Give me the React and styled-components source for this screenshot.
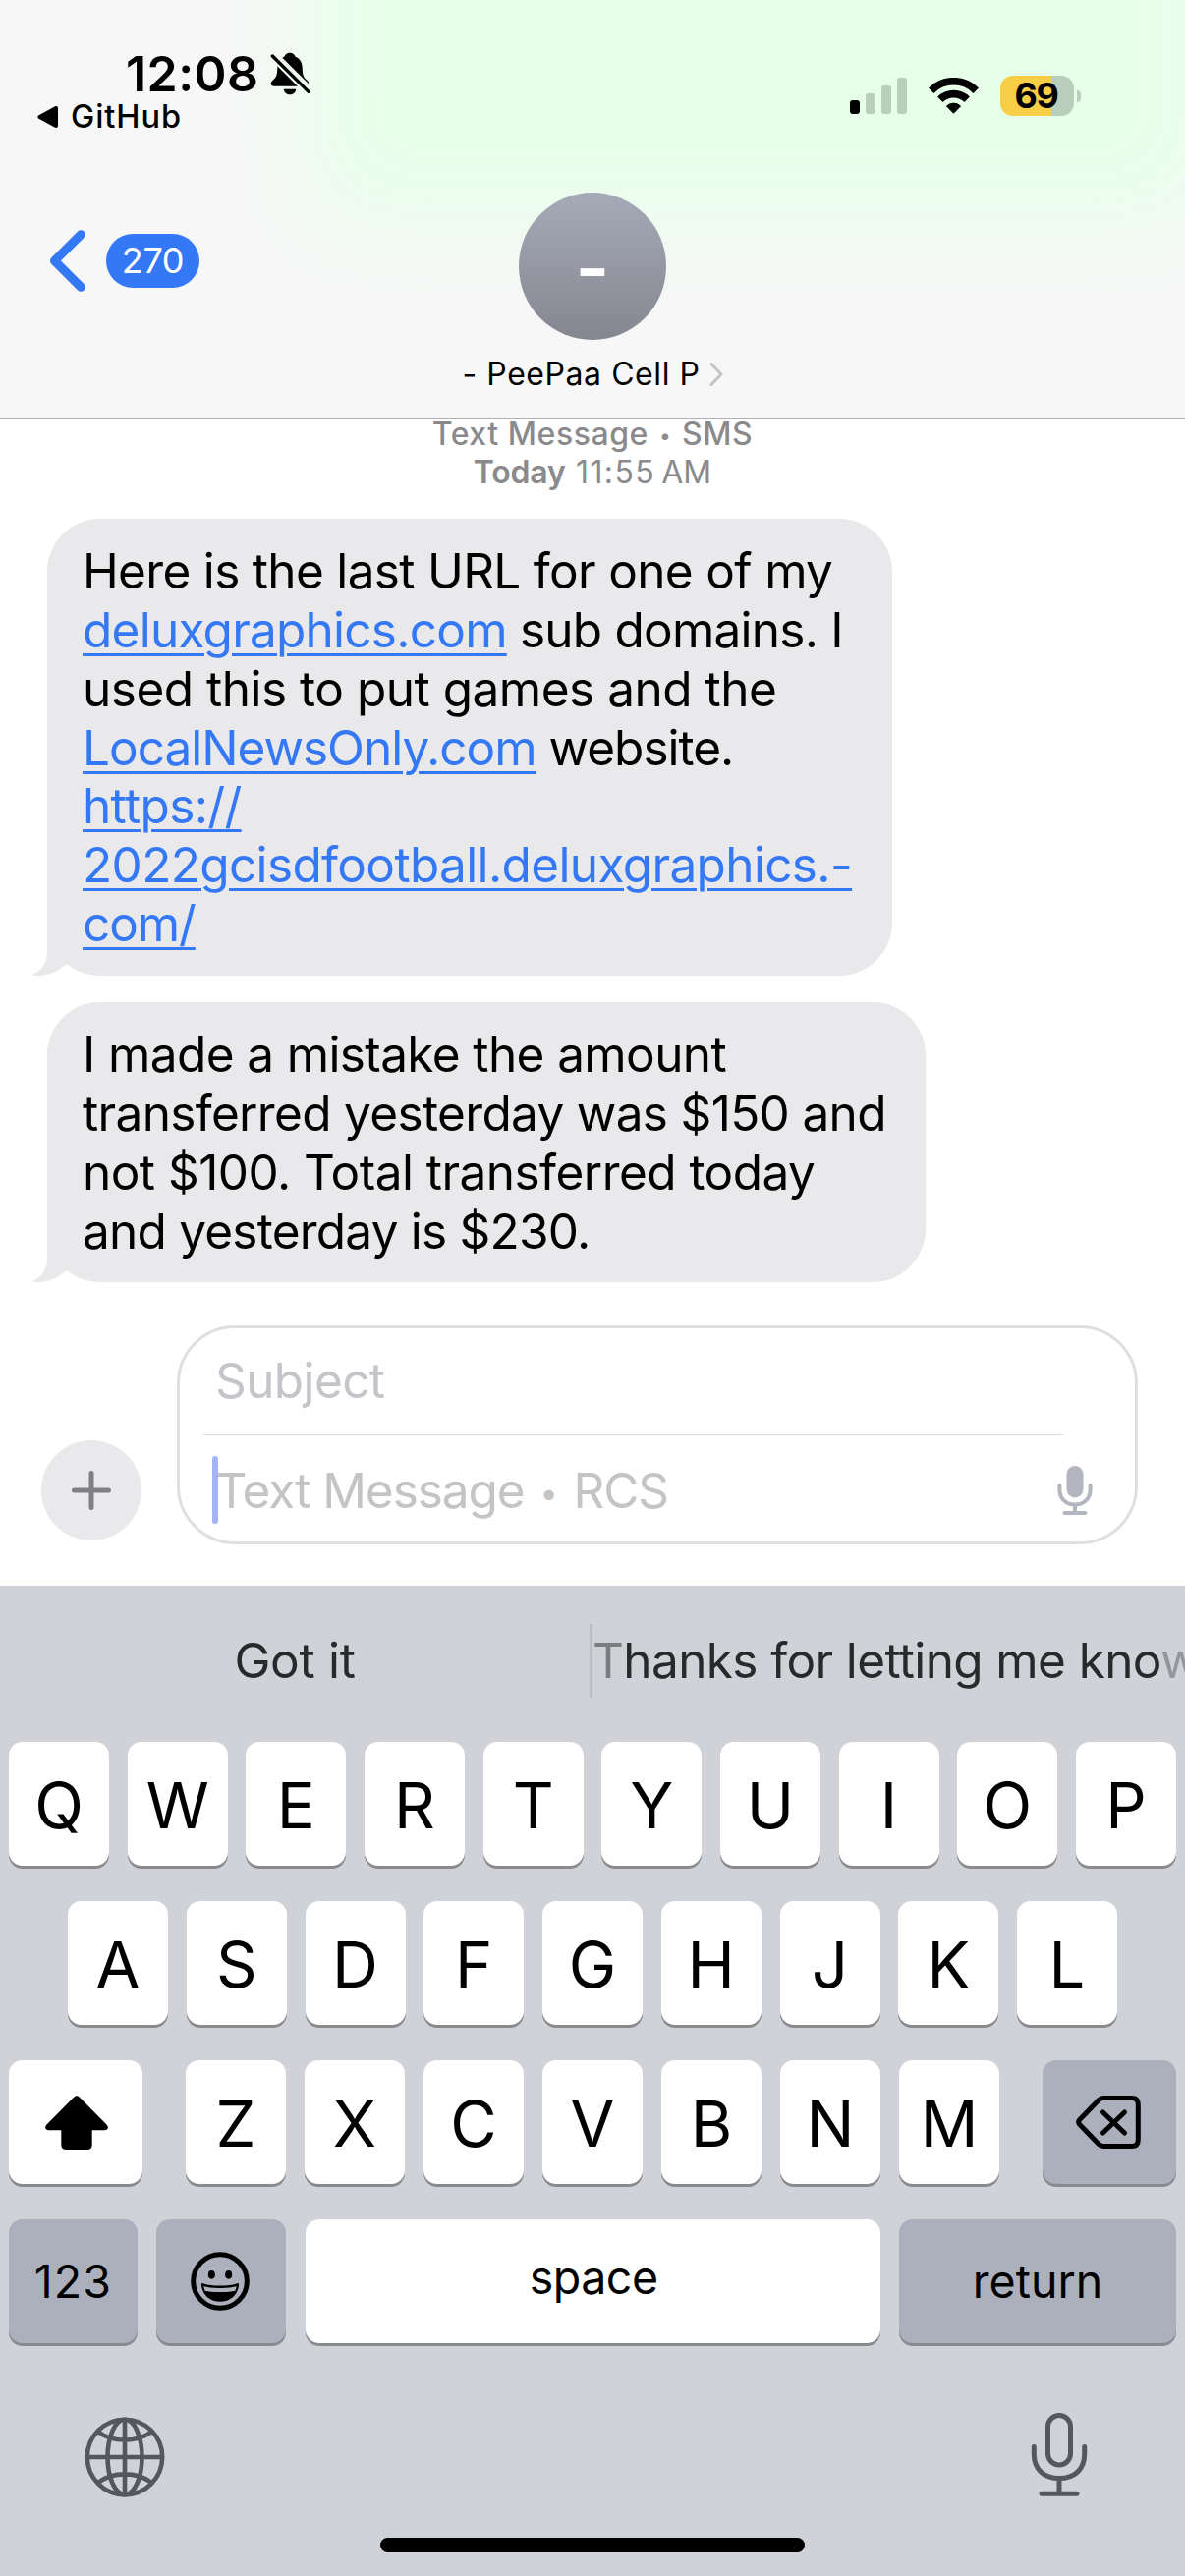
import React from 'react';
import styled, { createGlobalStyle } from 'styled-components';

const GlobalStyle = createGlobalStyle`
  *, *::before, *::after { box-sizing: border-box; }
  body { margin: 0; background: #fff; }
  svg { display: block; flex: none; }
`;

const Screen = styled.main`
  width: 1206px;
  height: 2622px;
  display: flex;
  flex-direction: column;
  overflow: hidden;
  background: #fff;
  color: #000;
  font-family: Inter, 'Liberation Sans', sans-serif;
  white-space: pre;
`;

/* ---------- header ---------- */

const Header = styled.header`
  position: relative;
  z-index: 1;
  height: 426px;
  flex: none;
  display: flex;
  flex-direction: column;
  overflow: hidden;
  background: #f7f7f7;
  border-bottom: 1px solid #b0b0b2;
`;

/* A green bubble scrolled beneath the translucent header. */
const HeaderGlow = styled.div`
  position: absolute;
  top: -200px;
  left: 315px;
  width: 920px;
  height: 425px;
  background: #e6ffe8;
  filter: blur(52px);
`;

const StatusBar = styled.div`
  position: relative;
  height: 150px;
  display: flex;
  justify-content: space-between;
`;

const StatusLeft = styled.div`
  padding-top: 48px;
  display: flex;
  flex-direction: column;
`;

const ClockRow = styled.div`
  display: flex;
  align-items: center;
  gap: 12px;
  height: 54px;
  padding-left: 128px;
`;

const Clock = styled.span`
  font-size: 50px;
  font-weight: 600;
  line-height: 54px;
  letter-spacing: 0.44px;
`;

const ReturnLink = styled.div`
  display: flex;
  align-items: center;
  gap: 12px;
  height: 30px;
  margin-top: 2px;
  padding-left: 38px;
  font-size: 32.5px;
  font-weight: 500;
  line-height: 30px;
  letter-spacing: 0.93px;
`;

const StatusRight = styled.div`
  display: flex;
  align-items: center;
  gap: 22px;
  height: 41px;
  margin: 77px 106px 0 0;
`;

const SignalBars = styled.div`
  display: flex;
  align-items: flex-end;
  gap: 6px;
  height: 37px;
`;

const SignalBar = styled.span`
  width: 10px;
  height: ${(p) => p.$height}px;
  border-radius: 3px;
  background: ${(p) => (p.$active ? '#000' : '#b9cfbc')};
`;

const Battery = styled.div`
  display: flex;
  align-items: center;
  gap: 3px;
`;

const BatteryBody = styled.div`
  display: flex;
  align-items: center;
  justify-content: center;
  width: 75px;
  height: 41px;
  padding-right: 2px;
  border-radius: 13px;
  background: linear-gradient(to right, #f7ce46 52px, #b9cfbc 52px);
  font-size: 36px;
  font-weight: 700;
  line-height: 41px;
  letter-spacing: -1.38px;
`;

const BatteryCap = styled.span`
  width: 4px;
  height: 12px;
  border-radius: 0 6px 6px 0;
  background: #b9cfbc;
`;

const NavBar = styled.nav`
  position: relative;
  flex: 1;
  display: grid;
  grid-template-columns: 1fr auto 1fr;
`;

const BackButton = styled.div`
  display: flex;
  align-items: center;
  gap: 21px;
  height: 63px;
  margin-top: 84px;
  padding-left: 50px;
`;

const UnreadBadge = styled.span`
  width: 95px;
  height: 55px;
  border-radius: 28px;
  background: #3478f6;
  color: #fff;
  text-align: center;
  font-size: 36px;
  line-height: 55px;
  letter-spacing: -0.38px;
`;

const Contact = styled.div`
  display: flex;
  flex-direction: column;
  align-items: center;
  padding-top: 46px;
`;

const Avatar = styled.div`
  width: 150px;
  height: 150px;
  border-radius: 50%;
  background: linear-gradient(#a6aab8, #848790);
  color: #fff;
  text-align: center;
  font-size: 75px;
  font-weight: 600;
  line-height: 154px;
`;

const ContactName = styled.div`
  display: flex;
  align-items: center;
  gap: 9px;
  margin-top: 15px;
  font-size: 32px;
  line-height: 39px;
  letter-spacing: 0.56px;
`;

/* ---------- thread ---------- */

const Thread = styled.section`
  display: flex;
  flex-direction: column;
  align-items: flex-start;
  margin-top: -4px;
`;

const Stamp = styled.div`
  align-self: center;
  margin-bottom: 28px;
  color: #8a8a8d;
  text-align: center;
  font-size: 32px;
  font-weight: 500;
  line-height: 39px;
  letter-spacing: 0.55px;
`;

const StampDay = styled.span`
  font-weight: 600;
  letter-spacing: -0.2px;
`;

const StampTime = styled.span`
  font-weight: 400;
  letter-spacing: 1.4px;
`;

const StampMeridiem = styled.span`
  font-weight: 400;
  letter-spacing: 0;
  word-spacing: -3px;
`;

const Dot = styled.span`
  display: inline-block;
  width: ${(p) => p.$width}px;
  height: 1em;
  line-height: 1em;
  font-size: 0.66em;
  letter-spacing: 0;
  text-align: center;
  vertical-align: 0.11em;
`;

const Bubble = styled.div`
  position: relative;
  width: ${(p) => p.$width}px;
  height: ${(p) => p.$height}px;
  margin: 0 0 27px 48px;
  padding: 24px 0 0 36px;
  border-radius: 54px;
  background: #e9e9eb;
`;

const BubbleTail = styled.svg`
  position: absolute;
  left: -16px;
  bottom: 0;
`;

const Line = styled.div`
  font-size: 49.5px;
  line-height: 59.85px;
  letter-spacing: ${(p) => p.$tracking}px;
`;

const Link = styled.span`
  color: #3478f6;
  text-decoration: underline;
  text-decoration-thickness: 3px;
  text-underline-offset: 6px;
`;

/* ---------- composer ---------- */

const Composer = styled.section`
  display: flex;
  align-items: flex-end;
  gap: 36px;
  padding: 17px 48px 42px 42px;
`;

const AddButton = styled.div`
  display: flex;
  align-items: center;
  justify-content: center;
  width: 102px;
  height: 102px;
  margin-bottom: 4px;
  border-radius: 50%;
  background: #e9e9eb;
`;

const Field = styled.div`
  flex: 1;
  height: 223px;
  border: 3px solid #dfdfdf;
  border-radius: 59px;
`;

const SubjectRow = styled.div`
  height: 108px;
  padding-left: 36px;
  color: #c5c5c9;
  font-size: 49.5px;
  line-height: 106px;
  letter-spacing: -0.6px;
`;

const FieldDivider = styled.div`
  height: 1px;
  margin: 0 73px 0 24px;
  background: #dcdcdc;
`;

const BodyRow = styled.div`
  display: flex;
  align-items: center;
  height: 108px;
  padding: 3px 43px 0 33px;
`;

const Caret = styled.span`
  width: 5.5px;
  height: 69px;
  border-radius: 3px;
  background: #a5b3f7;
`;

const Placeholder = styled.span`
  flex: 1;
  margin-left: -2px;
  color: #c4c4c4;
  font-size: 49.5px;
  line-height: 60px;
  letter-spacing: -1.05px;
`;

/* ---------- keyboard ---------- */

const Keyboard = styled.section`
  flex: 1;
  display: flex;
  flex-direction: column;
  background: #d1d2d8;
`;

const Suggestions = styled.div`
  display: flex;
  height: 159px;
  padding: 39px 0 45px;
`;

const Suggestion = styled.div`
  width: ${(p) => p.$width}px;
  overflow: hidden;
  color: #28292b;
  text-align: ${(p) => p.$align || 'left'};
  font-size: 49.5px;
  line-height: 75px;
  letter-spacing: ${(p) => p.$tracking}px;
`;

const Faded = styled.span`
  opacity: ${(p) => p.$opacity};
`;

const SuggestionDivider = styled.div`
  width: 3px;
  height: 75px;
  background: #bdbec4;
`;

const KeyRow = styled.div`
  display: flex;
  justify-content: space-between;
  margin-bottom: 36px;
  padding: 0 ${(p) => p.$inset || 9}px;
`;

const KeyGroup = styled.div`
  display: flex;
  justify-content: space-between;
  width: 828px;
`;

const Key = styled.div`
  display: flex;
  align-items: center;
  justify-content: center;
  width: ${(p) => p.$width || 102}px;
  height: 126px;
  padding: ${(p) => p.$pad || '3px 0 0'};
  border-radius: 14px;
  background: ${(p) => (p.$dark ? '#abb0bc' : '#fff')};
  box-shadow: 0 3px 0 #898a8d;
  font-size: ${(p) => (p.$pad ? 46.5 : 65)}px;
  letter-spacing: ${(p) => p.$tracking || 0}px;
`;

const KeyboardFooter = styled.div`
  display: flex;
  justify-content: space-between;
  align-items: center;
  height: 88px;
  margin-top: 33px;
  padding: 0 99px 0 86px;
`;

const GlobeSlot = styled.div`
  padding-top: 6px;
`;

const MicSlot = styled.div`
  padding-top: 2px;
`;

const HomeIndicator = styled.div`
  width: 432px;
  height: 15px;
  margin: 41px auto 0;
  border-radius: 8px;
  background: #000;
`;

/* ---------- icons ---------- */

const BellSlash = () => (
  <svg width="41" height="44" viewBox="30 28 123 132">
    <defs>
      <mask id="bell-cut">
        <rect x="0" y="0" width="192" height="192" fill="#fff" />
        <path d="M20 19L170 168" stroke="#000" strokeWidth="29" />
      </mask>
    </defs>
    <g mask="url(#bell-cut)">
      <path d="M90 30C81 30 75 35 73 42C59 48 52 60 52 76C51 98 49 105 38 114C29 121 31 132 42 132H138C149 132 151 121 142 114C131 105 129 98 128 76C128 60 121 48 107 42C105 35 99 30 90 30Z" />
    </g>
    <path d="M71 141H109C107 152 99 158 90 158C81 158 73 152 71 141Z" />
    <path d="M37 40L147 149" stroke="#000" strokeWidth="10" strokeLinecap="round" />
  </svg>
);

const Wifi = () => (
  <svg width="51" height="37" viewBox="0 0 51 37" fill="none" stroke="#000">
    <path d="M2.7 13.2A32.2 32.2 0 0 1 48.3 13.2" strokeWidth="7.7" />
    <path d="M11.8 22.3A19.4 19.4 0 0 1 39.2 22.3" strokeWidth="7.7" />
    <path d="M18.4 29A10.2 10.2 0 0 1 32.6 29L25.5 36.2Z" fill="#000" strokeWidth="1" strokeLinejoin="round" />
  </svg>
);

const ReturnArrow = () => (
  <svg width="22" height="22" viewBox="0 0 22 22">
    <path d="M19 2V20L2.5 11Z" stroke="#000" strokeWidth="4" strokeLinejoin="round" />
  </svg>
);

const BackChevron = () => (
  <svg width="37" height="63" viewBox="0 0 37 63" fill="none">
    <path d="M32.3 4.7L5.5 31.5L32.3 58.3" stroke="#3478f6" strokeWidth="9" strokeLinecap="round" strokeLinejoin="round" />
  </svg>
);

const SmallChevron = () => (
  <svg width="14" height="24" viewBox="0 0 14 24" fill="none">
    <path d="M2 1.5L12 12L2 22.5" stroke="#c4c4c6" strokeWidth="3" strokeLinecap="round" strokeLinejoin="round" />
  </svg>
);

const Tail = () => (
  <BubbleTail width="46" height="58" viewBox="0 0 46 58">
    <path d="M16 0V33C16 45 11 53 0 57.3C12 59.5 25 56 35 46.3H45V0Z" fill="#e9e9eb" />
  </BubbleTail>
);

const Plus = () => (
  <svg width="40" height="40" viewBox="0 0 40 40">
    <path d="M20 2.5V37.5M2.5 20H37.5" stroke="#7f7f86" strokeWidth="5" strokeLinecap="round" />
  </svg>
);

const MicFilled = () => (
  <svg width="36" height="50" viewBox="0 0 36 50" fill="none" stroke="#b3b6bf" strokeWidth="4" strokeLinecap="round">
    <rect x="9.5" y="0" width="17" height="32.5" rx="8.5" fill="#b3b6bf" stroke="none" />
    <path d="M2.4 20V24.5C2.4 33.5 9 39.5 18 39.5S33.6 33.5 33.6 24.5V20M18 40V47M7.5 48H28.5" />
  </svg>
);

const ShiftArrow = () => (
  <svg width="64" height="55" viewBox="0 0 64 55">
    <path d="M29 1.7Q32 -1.2 35 1.7L62.5 29.5Q66 34 61 35.3H47.7V50Q47.7 55 42.7 55H21.3Q16.3 55 16.3 50V35.3H3Q-2 34 1.5 29.5Z" />
  </svg>
);

const Backspace = () => (
  <svg width="66" height="54" viewBox="0 0 66 54" fill="none" stroke="#000" strokeWidth="5" strokeLinecap="round" strokeLinejoin="round">
    <path d="M28 2.5H57Q63.3 2.5 63.3 9V45Q63.3 51.5 57 51.5H28Q25 51.5 23 49.3L3.8 29.5Q1.6 27 3.8 24.5L23 4.7Q25 2.5 28 2.5Z" />
    <path d="M27.5 17L49.5 38M49.5 17L27.5 38" />
  </svg>
);

const Emoji = () => (
  <svg width="60" height="60" viewBox="30 29 180 180">
    <circle cx="120" cy="119" r="82" fill="none" stroke="#000" strokeWidth="15" />
    <ellipse cx="94" cy="99" rx="10.5" ry="13" />
    <ellipse cx="146" cy="99" rx="10.5" ry="13" />
    <path d="M68 125.5C90 135 150 135 172 125.5C177 124 178 128 177 133C172 163 150 181 120 181C90 181 68 163 63 133C62 128 63 124 68 125.5Z" />
    <path d="M70 134C90 142 150 142 170 134Q169 142 166 148C150 153.5 90 153.5 74 148Q71 142 70 134Z" fill="#abb0bc" />
  </svg>
);

const Globe = () => (
  <svg width="82" height="82" viewBox="-41 -41 82 82" fill="none" stroke="#54575d" strokeWidth="4.6">
    <circle r="38.2" />
    <ellipse rx="17.5" ry="38.2" />
    <path d="M0 -38V38M-38 0H38M-27.5 -26C-12 -14.5 12 -14.5 27.5 -26M-27.5 26C-12 14.5 12 14.5 27.5 26" />
  </svg>
);

const MicOutline = () => (
  <svg width="58" height="88" viewBox="0 0 58 88" fill="none" stroke="#54575d" strokeWidth="5" strokeLinecap="round">
    <rect x="17.5" y="3.5" width="23" height="50.5" rx="11.5" />
    <path d="M3.3 35.5V43C3.3 58.5 13.5 67.5 29 67.5S54.7 58.5 54.7 43V35.5M29 67.5V83M11 83.3H47" />
  </svg>
);

const letters = (row) => [...row].map((c) => <Key key={c}>{c}</Key>);

export default function App() {
  return (
    <Screen>
      <GlobalStyle />
      <Header>
        <HeaderGlow />
        <StatusBar>
          <StatusLeft>
            <ClockRow>
              <Clock>12:08</Clock>
              <BellSlash />
            </ClockRow>
            <ReturnLink>
              <ReturnArrow />
              <span>GitHub</span>
            </ReturnLink>
          </StatusLeft>
          <StatusRight>
            <SignalBars>
              <SignalBar $height={14} $active />
              <SignalBar $height={21} />
              <SignalBar $height={29} />
              <SignalBar $height={37} />
            </SignalBars>
            <Wifi />
            <Battery>
              <BatteryBody>69</BatteryBody>
              <BatteryCap />
            </Battery>
          </StatusRight>
        </StatusBar>
        <NavBar>
          <BackButton>
            <BackChevron />
            <UnreadBadge>270</UnreadBadge>
          </BackButton>
          <Contact>
            <Avatar>-</Avatar>
            <ContactName>
              <span>- PeePaa Cell P</span>
              <SmallChevron />
            </ContactName>
          </Contact>
        </NavBar>
      </Header>

      <Thread>
        <Stamp>
          <div>Text Message <Dot $width={16}>•</Dot> SMS</div>
          <div>
            <StampDay>Today</StampDay>
            <StampTime> 11:55</StampTime>
            <StampMeridiem> AM</StampMeridiem>
          </div>
        </Stamp>
        <Bubble $width={860} $height={465}>
          <Line $tracking={-0.68}>Here is the last URL for one of my</Line>
          <Line $tracking={-0.76}><Link>deluxgraphics.com</Link> sub domains. I</Line>
          <Line $tracking={-0.49}>used this to put games and the</Line>
          <Line $tracking={-1}><Link>LocalNewsOnly.com</Link> website.</Line>
          <Line $tracking={-0.65}><Link>https://</Link></Line>
          <Line $tracking={-0.64}><Link>2022gcisdfootball.deluxgraphics.-</Link></Line>
          <Line $tracking={-1.1}><Link>com/</Link></Line>
          <Tail />
        </Bubble>
        <Bubble $width={894} $height={285}>
          <Line $tracking={-0.61}>I made a mistake the amount</Line>
          <Line $tracking={-0.66}>transferred yesterday was $150 and</Line>
          <Line $tracking={-0.53}>not $100. Total transferred today</Line>
          <Line $tracking={-0.77}>and yesterday is $230.</Line>
          <Tail />
        </Bubble>
      </Thread>

      <Composer>
        <AddButton><Plus /></AddButton>
        <Field>
          <SubjectRow>Subject</SubjectRow>
          <FieldDivider />
          <BodyRow>
            <Caret />
            <Placeholder>Text Message <Dot $width={24}>•</Dot> RCS</Placeholder>
            <MicFilled />
          </BodyRow>
        </Field>
      </Composer>

      <Keyboard>
        <Suggestions>
          <Suggestion $width={600} $align="center" $tracking={-0.3}>Got it</Suggestion>
          <SuggestionDivider />
          <Suggestion $width={603} $tracking={-0.62}>
            <Faded $opacity={0.5}>T</Faded>hanks for letting me kno<Faded $opacity={0.35}>w</Faded>
          </Suggestion>
        </Suggestions>
        <KeyRow>{letters('QWERTYUIOP')}</KeyRow>
        <KeyRow $inset={69}>{letters('ASDFGHJKL')}</KeyRow>
        <KeyRow>
          <Key $width={136} $pad="0 0 0 1px"><ShiftArrow /></Key>
          <KeyGroup>{letters('ZXCVBNM')}</KeyGroup>
          <Key $width={136} $pad="0 3px 0 0" $dark><Backspace /></Key>
        </KeyRow>
        <KeyRow>
          <Key $width={131} $pad="0" $dark $tracking={1.2}>123</Key>
          <Key $width={132} $pad="0 2px 0 0" $dark><Emoji /></Key>
          <Key $width={585} $pad="0 0 8px 2px" $tracking={-0.5}>space</Key>
          <Key $width={282} $pad="0" $dark>return</Key>
        </KeyRow>
        <KeyboardFooter>
          <GlobeSlot><Globe /></GlobeSlot>
          <MicSlot><MicOutline /></MicSlot>
        </KeyboardFooter>
        <HomeIndicator />
      </Keyboard>
    </Screen>
  );
}
